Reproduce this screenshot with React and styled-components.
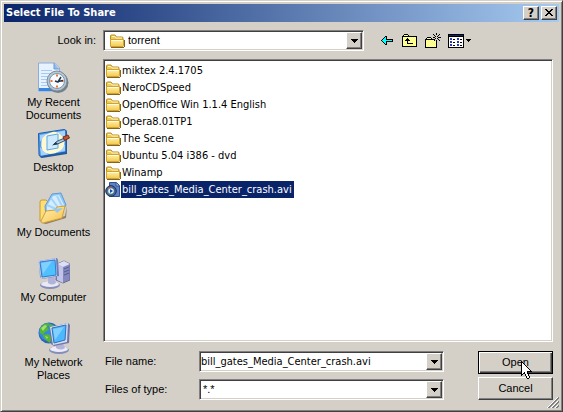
import React, { useState } from 'react';
import styled, { createGlobalStyle, css } from 'styled-components';

const FACE = '#d4d0c8';
const LABEL_FONT = '"Liberation Sans", Arial, sans-serif';
const LIST_FONT = '"DejaVu Sans Condensed", "Noto Sans", sans-serif';

const GlobalStyle = createGlobalStyle`
    body {
        margin: 0;
        background: ${FACE};
    }

    *, *::before, *::after {
        box-sizing: border-box;
    }

    button, input, select {
        font: inherit;
        color: inherit;
        margin: 0;
        padding: 0;
        border-radius: 0;
    }

    svg {
        display: block;
        flex: none;
    }
`;

const raised = css`
    border: 1px solid;
    border-color: #ffffff #404040 #404040 #ffffff;
    box-shadow: inset -1px -1px 0 #808080;
`;

const sunken = css`
    border: 1px solid;
    border-color: #808080 #ffffff #ffffff #808080;
    box-shadow: inset 1px 1px 0 #404040, inset -1px -1px 0 ${FACE};
`;

const Dialog = styled.main`
    display: flex;
    flex-direction: column;
    min-height: 100vh;
    border: 1px solid;
    border-color: ${FACE} #404040 #404040 ${FACE};
    box-shadow: inset 1px 1px 0 #ffffff, inset -1px -1px 0 #808080;
    padding: 3px;
    background: ${FACE};
    color: #000000;
    font: 11px/13px ${LABEL_FONT};
`;

const TitleBar = styled.header`
    display: flex;
    align-items: center;
    gap: 2px;
    height: 18px;
    padding: 0 2px;
    background: linear-gradient(to right, #0a246a, #a6caf0);
`;

const Title = styled.h1`
    flex: 1;
    margin: 0;
    color: #ffffff;
    font: bold 11px/16px ${LIST_FONT};
`;

const CaptionButton = styled.button`
    ${raised}
    display: flex;
    align-items: center;
    justify-content: center;
    width: 16px;
    height: 14px;
    background: ${FACE};
    font: bold 12px/12px ${LIST_FONT};
`;

const LookInRow = styled.div`
    display: flex;
    align-items: center;
    padding: 8px 6px 8px 0;
`;

const LookInLabel = styled.label`
    width: 99px;
    padding-right: 7px;
    text-align: right;
`;

const Combo = styled.div`
    ${sunken}
    display: flex;
    flex: 1;
    align-items: center;
    min-width: 0;
    height: 21px;
    padding: 1px;
    background: #ffffff;
`;

const ComboIcon = styled.span`
    padding-left: 4px;
`;

const ComboSelect = styled.select`
    flex: 1;
    min-width: 0;
    height: 17px;
    padding-left: ${(props) => props.$indent}px;
    border: 0;
    outline: 0;
    appearance: none;
    background: transparent;
`;

const ComboInput = styled.input`
    flex: 1;
    min-width: 0;
    height: 17px;
    border: 0;
    outline: 0;
    background: transparent;
    font-family: ${LIST_FONT};
`;

const ComboButton = styled.button`
    ${raised}
    display: flex;
    align-items: center;
    justify-content: center;
    width: 16px;
    height: 17px;
    background: ${FACE};
`;

const Toolbar = styled.div`
    display: flex;
    width: 189px;
    padding-left: 11px;
`;

const ToolButton = styled.button`
    display: flex;
    align-items: center;
    justify-content: center;
    gap: 2px;
    width: ${(props) => (props.$wide ? 30 : 23)}px;
    height: 21px;
    border: 0;
    background: transparent;
`;

const Body = styled.div`
    display: grid;
    flex: 1;
    grid-template-columns: 99px 1fr;
    padding-right: 6px;
`;

const Places = styled.nav`
    display: flex;
    flex-direction: column;
    padding-top: 3px;
`;

const Place = styled.a`
    display: flex;
    flex-direction: column;
    align-items: center;
    gap: 2px;
    height: 65px;
    padding: 0 20px;
    color: inherit;
    text-align: center;
    text-decoration: none;
    white-space: ${(props) => (props.$wrap ? 'normal' : 'nowrap')};
`;

const Content = styled.div`
    display: flex;
    flex-direction: column;
    gap: 9px;
    padding-bottom: 8px;
`;

const FileList = styled.ul`
    ${sunken}
    flex: 1;
    margin: 0;
    padding: 2px 1px;
    background: #ffffff;
    list-style: none;
    font-family: ${LIST_FONT};
`;

const FileRow = styled.li`
    display: flex;
    align-items: center;
    height: 17px;
`;

const FileName = styled.span`
    padding: 0 2px 0 1px;
    line-height: 17px;
    background: ${(props) => (props.$selected ? '#0a246a' : 'transparent')};
    color: ${(props) => (props.$selected ? '#ffffff' : '#000000')};
`;

const Footer = styled.form`
    display: flex;
    gap: 34px;
`;

const Fields = styled.div`
    display: flex;
    flex: 1;
    flex-direction: column;
    gap: 7px;
    min-width: 0;
`;

const Field = styled.div`
    display: flex;
    align-items: center;
`;

const FieldLabel = styled.label`
    width: 96px;
    padding-left: 2px;
`;

const Actions = styled.div`
    display: flex;
    flex-direction: column;
    gap: 3px;
    width: 75px;
`;

const PushButton = styled.button`
    ${raised}
    position: relative;
    height: 23px;
    background: ${FACE};
    ${(props) => props.$primary && css`
        border-color: #000000;
        box-shadow: inset 1px 1px 0 #ffffff, inset -1px -1px 0 #404040, inset -2px -2px 0 #808080;
    `}
`;

const Pointer = styled.span`
    position: absolute;
    top: 9px;
    left: 42px;
    z-index: 1;
    pointer-events: none;
`;

const Grip = styled.span`
    position: absolute;
    right: 0;
    bottom: 0;
`;

const GripAnchor = styled.div`
    position: relative;
`;

const inks = {
    k: '#000000',
    w: '#ffffff',
    y: '#ffff66',
    l: '#ffffc0',
    c: '#00ffff',
    n: '#0a246a',
    b: '#2838b0',
    g: '#808080',
};

// every character is one pixel, a dot is transparent
function PixelArt({ rows }) {
    const width = rows[0].length;
    return (
        <svg width={width} height={rows.length} shapeRendering="crispEdges" aria-hidden="true">
            {rows.map((row, y) => row.split('').map((ink, x) => (
                inks[ink] ? <rect key={`${x}-${y}`} x={x} y={y} width="1" height="1" fill={inks[ink]} /> : null
            )))}
        </svg>
    );
}

const downArrow = [
    'kkkkkkk',
    '.kkkkk.',
    '..kkk..',
    '...k...',
];

const smallArrow = [
    'kkkkk',
    '.kkk.',
    '..k..',
];

const closeMark = [
    'kk....kk',
    '.kk..kk.',
    '..kkkk..',
    '...kk...',
    '..kkkk..',
    '.kk..kk.',
    'kk....kk',
    '........',
];

const backArrow = [
    '....kk......',
    '...kck......',
    '..kcck......',
    '.kccckkkkkkk',
    'kcccccccccck',
    '.kccckkkkkkk',
    '..kcck......',
    '...kck......',
    '....kk......',
];

const upFolder = [
    '..kkkk.........',
    '.klylyk........',
    'kkkkkkkkkkkkkkk',
    'kylylylylylylyk',
    'klylykylylylylk',
    'kylykkkylylylyk',
    'klykkkkklylylyk',
    'kylylkylylylylk',
    'klylykylylylylk',
    'kylylkkkkkkylyk',
    'klylylylylylylk',
    'kylylylylylylyk',
    'kkkkkkkkkkkkkkk',
];

const newFolder = [
    '...........k....',
    '........k..k..k.',
    '.........k...k..',
    '..........k.k...',
    '..kkkk..kk...kkk',
    '.klylyk...k.k...',
    'kkkkkkkkkk...k..',
    'kylylylylk.k..k.',
    'klylylylylyk....',
    'kylylylylylk....',
    'klylylylylyk....',
    'kylylylylylk....',
    'klylylylylyk....',
    'kylylylylylk....',
    'kkkkkkkkkkkk....',
];

const viewList = [
    'kkkkkkkkkkkkkkkk',
    'knnnnnnnnnnnnnnk',
    'kkkkkkkkkkkkkkkk',
    'kwwwwwwwwwwwwwwk',
    'kwbbwwwwwbbwwwwk',
    'kwbbwkkwwbbwkkwk',
    'kwwwwwwwwwwwwwwk',
    'kwbbwwwwwbbwwwwk',
    'kwbbwkkwwbbwkkwk',
    'kwwwwwwwwwwwwwwk',
    'kwbbwwwwwbbwwwwk',
    'kwbbwkkwwbbwkkwk',
    'kwwwwwwwwwwwwwwk',
    'kkkkkkkkkkkkkkkk',
];

const pointerArrow = [
    'k...........',
    'kk..........',
    'kwk.........',
    'kwwk........',
    'kwwwk.......',
    'kwwwwk......',
    'kwwwwwk.....',
    'kwwwwwwk....',
    'kwwwwwwwk...',
    'kwwwwwwwwk..',
    'kwwwwwkkkkk.',
    'kwwkwwk.....',
    'kwkkwwk.....',
    'kk..kwwk....',
    'k...kwwk....',
    '.....kwwk...',
    '.....kwwk...',
    '......kk....',
];

const gripLines = [
    '..........wg',
    '.........wgg',
    '........wgg.',
    '.......wgg..',
    '......wgg.wg',
    '.....wgg.wgg',
    '....wgg.wgg.',
    '...wgg.wgg..',
    '..wgg.wgg.wg',
    '.wgg.wgg.wgg',
    'wgg.wgg.wgg.',
];

function FolderIcon() {
    return (
        <svg width="16" height="16" viewBox="0 0 16 16" aria-hidden="true">
            <path d="M1.5 13V3Q1.5 2 2.5 2H6l1.5 2H13q1 0 1 1v8z" fill="#f0cb58" stroke="#b98d25" />
            <path d="M3 3.5h3L7 5h6" fill="none" stroke="#fff3b5" />
            <path d="M1.5 13.5V6.5H14.5V12.5Q14.5 13.5 13.5 13.5z" fill="url(#folderFront)" stroke="#cfa338" />
            <path d="M2.5 7.5h11" stroke="#fffbe0" />
            <path d="M2 14.5h13M15.5 7v7" stroke="#866519" />
            <defs>
                <linearGradient id="folderFront" x2="0" y2="1">
                    <stop stopColor="#fff3a8" />
                    <stop offset="1" stopColor="#f4c84d" />
                </linearGradient>
            </defs>
        </svg>
    );
}

function VideoIcon() {
    return (
        <svg width="16" height="16" viewBox="0 0 16 16" aria-hidden="true">
            <path d="M4.5.5h7l3 3v11h-10z" fill="#5f83c8" stroke="#31508f" />
            <path d="M11 1v3h3" fill="#b7caed" stroke="#31508f" />
            <circle cx="6" cy="9" r="5.3" fill="#456792" stroke="#1b315d" />
            <path d="M3 7a4 4 0 0 1 4-2" fill="none" stroke="#b86a4a" />
            <path d="M2.5 9.5a4 4 0 0 0 3 3" fill="none" stroke="#4f9a78" />
            <circle cx="6" cy="9" r="2.8" fill="#e8f2ff" />
            <path d="m5 7 3 2-3 2z" fill="#174c9c" />
        </svg>
    );
}

function RecentIcon() {
    return (
        <svg width="32" height="32" viewBox="0 0 32 32" aria-hidden="true">
            <path d="M.5 1h16l5 5v23H.5z" fill="#e6f2ff" stroke="#8caedb" />
            <path d="M16 1v6h5" fill="#8ebcf0" stroke="#719bcc" />
            <path d="M3 8.5h11M3 11.5h10M3 14.5h7M3 17.5h6M3 20.5h6M3 23.5h7" stroke="#a5cbf5" />
            <path d="M1 26h13l4 3H1z" fill="#3487e4" />
            <ellipse cx="20" cy="20.5" rx="10.5" ry="10.5" fill="#73808c" />
            <circle cx="19" cy="19" r="10" fill="#b9c5cf" stroke="#7d8c99" />
            <circle cx="19" cy="19" r="7.5" fill="#f7fbff" stroke="#7799b5" />
            <path d="M19 12.5v2M19 23.5v2M12.5 19h2M23.5 19h2" stroke="#ef7136" strokeWidth="2" />
            <path d="m17 19 3 1 3-5M20 19.5l5-1" fill="none" stroke="#223449" strokeWidth="1.5" />
        </svg>
    );
}

function DesktopIcon() {
    return (
        <svg width="32" height="32" viewBox="0 0 32 32" aria-hidden="true">
            <path d="M2 7 27 3q2 0 2 2v22L4 31q-2 0-2-2z" fill="#265998" />
            <path d="M.5 6.500 26 2.500q2 0 2 2V25L3 29.500q-2 0-2-2z" fill="#4f9be8" stroke="#1c5eae" />
            <path d="m2 8 8-1.500-8 8zM19 5l8-1.500v8zM2 20l8 7.500-7 1zM27 17v7l-8 1.500z" fill="#a6d2ff" />
            <path d="M14.500 5q5-1 8.500 3 4 3 3.500 8-1 6-5 8-4 3-9 3-5 0-8-4-2-4-1-9 1-4 4-6 3-2 7-3z" fill="#fff8d0" />
            <path d="m9 9 11-2v14L9 23z" fill="#cfe9ff" stroke="#58a9ee" />
            <path d="m15.500 17.500 3-3 7-3 1.500 2-7.500 3.500z" fill="#a9cbe5" stroke="#315476" />
            <path d="m25 10 5-2 1.500 3-5 2.500z" fill="#c35430" stroke="#6e3020" />
            <path d="m14 18.500 4-3.500 2 2z" fill="#253847" />
        </svg>
    );
}

function DocumentsIcon() {
    return (
        <svg width="32" height="32" viewBox="0 0 32 32" aria-hidden="true">
            <path d="m4 31 23-7 2-10-1 12-20 6z" fill="#8f8062" />
            <path d="M2 29V10q0-2 2-2h4l3 3v16z" fill="#ffde74" stroke="#c49a35" />
            <path d="m7 14 7-12 9-1 5 12-7 11H8z" fill="#8ec7f7" stroke="#639bd2" />
            <path d="m9 14 6-10 6-1 5 10-5 8H9z" fill="#d5edff" />
            <path d="m13 6 8 11M19 4l5 10M9 13l9 4" stroke="#a2d3f9" strokeWidth="2" />
            <path d="m3 29 5-10 9-1 2-3 8-1-3 12-19 5q-2 0-2-2z" fill="url(#documentsFront)" stroke="#d1a03b" />
            <path d="m15 17 10-1-6 5z" fill="#8fc8f2" />
            <defs>
                <linearGradient id="documentsFront" x2="1" y2="1">
                    <stop stopColor="#fff5b7" />
                    <stop offset="1" stopColor="#f9bd48" />
                </linearGradient>
            </defs>
        </svg>
    );
}

function ComputerIcon() {
    return (
        <svg width="32" height="32" viewBox="0 0 32 32" aria-hidden="true">
            <path d="m19 7 7-3 6 3v16l-7 3-7-3z" fill="#8389bd" stroke="#686c9e" />
            <path d="m19 7 6 3v16l-6-3z" fill="#c1c4e6" />
            <path d="m19 7 7-3 6 3-7 3z" fill="#dedff2" />
            <path d="m26 12 5-2M26 15l5-2M26 18l5-2" stroke="#535b96" />
            <ellipse cx="12" cy="28" rx="10" ry="4" fill="#858db8" />
            <ellipse cx="12" cy="27" rx="9" ry="3" fill="#e8e9f5" />
            <path d="m10 20 6-1 2 7q-4 3-8 0z" fill="#b0b4d8" />
            <path d="m1 4 18-3 1 2 1 16-17 3-2-2z" fill="#6d7db7" />
            <path d="m0 4 18-3 1 18-16 3z" fill="#bcc8e9" />
            <path d="m2 5 15-2 1 15-14 2z" fill="url(#computerScreen)" stroke="#377bc8" />
            <path d="m3 6 11-2-9 13z" fill="#b7e8ff" opacity=".45" />
            <defs>
                <linearGradient id="computerScreen" x2="1" y2="1">
                    <stop stopColor="#5cb7ff" />
                    <stop offset="1" stopColor="#45c7ff" />
                </linearGradient>
            </defs>
        </svg>
    );
}

function NetworkIcon() {
    return (
        <svg width="32" height="32" viewBox="0 0 32 32" aria-hidden="true">
            <circle cx="11" cy="11" r="10.500" fill="#2866b6" />
            <circle cx="10" cy="10" r="9" fill="#3586df" />
            <path d="m2 6 4-4 5-1-2 4 2 3-4 2-2 3-3-2zM10 2l5 1 4 5-5 2-2-3zM5 13l5-1 4 3-2 6-3-2-3-3z" fill="#55b637" />
            <path d="m3 6 4-3 2 1-4 5zM7 14l3 1-1 2z" fill="#a4df71" />
            <ellipse cx="21" cy="28" rx="10" ry="4" fill="#858db8" />
            <ellipse cx="21" cy="27" rx="9" ry="3" fill="#ececf8" />
            <path d="m18 20 6-1 3 7q-4 3-9 0z" fill="#b1b4d7" />
            <path d="m12 5 18-4 2 2-1 18-15 3-3-2z" fill="#7076a5" />
            <path d="m12 5 18-4-1 19-14 3z" fill="#d5daf0" />
            <path d="m14 6 14-3-1 15-11 3z" fill="#4eb8ff" stroke="#3270b7" />
            <path d="m15 7 11-2-9 13z" fill="#a3e1ff" opacity=".6" />
        </svg>
    );
}

const places = [
    { title: 'My Recent Documents', icon: RecentIcon, wrap: true },
    { title: 'Desktop', icon: DesktopIcon },
    { title: 'My Documents', icon: DocumentsIcon },
    { title: 'My Computer', icon: ComputerIcon },
    { title: 'My Network Places', icon: NetworkIcon, wrap: true },
];

const files = [
    'miktex 2.4.1705',
    'NeroCDSpeed',
    'OpenOffice Win 1.1.4 English',
    'Opera8.01TP1',
    'The Scene',
    'Ubuntu 5.04 i386 - dvd',
    'Winamp',
    'bill_gates_Media_Center_crash.avi',
];

function App() {
    const [fileName, setFileName] = useState('bill_gates_Media_Center_crash.avi');

    return (
        <Dialog>
            <GlobalStyle />
            <TitleBar>
                <Title>Select File To Share</Title>
                <CaptionButton type="button" aria-label="Help">?</CaptionButton>
                <CaptionButton type="button" aria-label="Close">
                    <PixelArt rows={closeMark} />
                </CaptionButton>
            </TitleBar>

            <LookInRow>
                <LookInLabel htmlFor="look-in">Look in:</LookInLabel>
                <Combo>
                    <ComboIcon><FolderIcon /></ComboIcon>
                    <ComboSelect id="look-in" $indent={3}>
                        <option>torrent</option>
                    </ComboSelect>
                    <ComboButton type="button" aria-label="Show folders">
                        <PixelArt rows={downArrow} />
                    </ComboButton>
                </Combo>
                <Toolbar>
                    <ToolButton type="button" aria-label="Back"><PixelArt rows={backArrow} /></ToolButton>
                    <ToolButton type="button" aria-label="Up one level"><PixelArt rows={upFolder} /></ToolButton>
                    <ToolButton type="button" aria-label="New folder"><PixelArt rows={newFolder} /></ToolButton>
                    <ToolButton type="button" aria-label="Views" $wide>
                        <PixelArt rows={viewList} />
                        <PixelArt rows={smallArrow} />
                    </ToolButton>
                </Toolbar>
            </LookInRow>

            <Body>
                <Places>
                    {places.map(({ title, icon: Icon, wrap }) => (
                        <Place key={title} href="#" $wrap={wrap}>
                            <Icon />
                            {title}
                        </Place>
                    ))}
                </Places>
                <Content>
                    <FileList role="listbox" aria-label="Files">
                        {files.map((file) => (
                            <FileRow
                                key={file}
                                role="option"
                                aria-selected={file === fileName}
                                onClick={() => setFileName(file)}
                            >
                                {file.endsWith('.avi') ? <VideoIcon /> : <FolderIcon />}
                                <FileName $selected={file === fileName}>{file}</FileName>
                            </FileRow>
                        ))}
                    </FileList>
                    <Footer onSubmit={(event) => event.preventDefault()}>
                        <Fields>
                            <Field>
                                <FieldLabel htmlFor="file-name">File name:</FieldLabel>
                                <Combo>
                                    <ComboInput
                                        id="file-name"
                                        value={fileName}
                                        onChange={(event) => setFileName(event.target.value)}
                                    />
                                    <ComboButton type="button" aria-label="Show file names">
                                        <PixelArt rows={downArrow} />
                                    </ComboButton>
                                </Combo>
                            </Field>
                            <Field>
                                <FieldLabel htmlFor="file-type">Files of type:</FieldLabel>
                                <Combo>
                                    <ComboSelect id="file-type" $indent={2}>
                                        <option>*.*</option>
                                    </ComboSelect>
                                    <ComboButton type="button" aria-label="Show file types">
                                        <PixelArt rows={downArrow} />
                                    </ComboButton>
                                </Combo>
                            </Field>
                        </Fields>
                        <Actions>
                            <PushButton type="submit" $primary>
                                Open
                                <Pointer><PixelArt rows={pointerArrow} /></Pointer>
                            </PushButton>
                            <PushButton type="button">Cancel</PushButton>
                        </Actions>
                    </Footer>
                </Content>
            </Body>
            <GripAnchor>
                <Grip><PixelArt rows={gripLines} /></Grip>
            </GripAnchor>
        </Dialog>
    );
}

export default App;
